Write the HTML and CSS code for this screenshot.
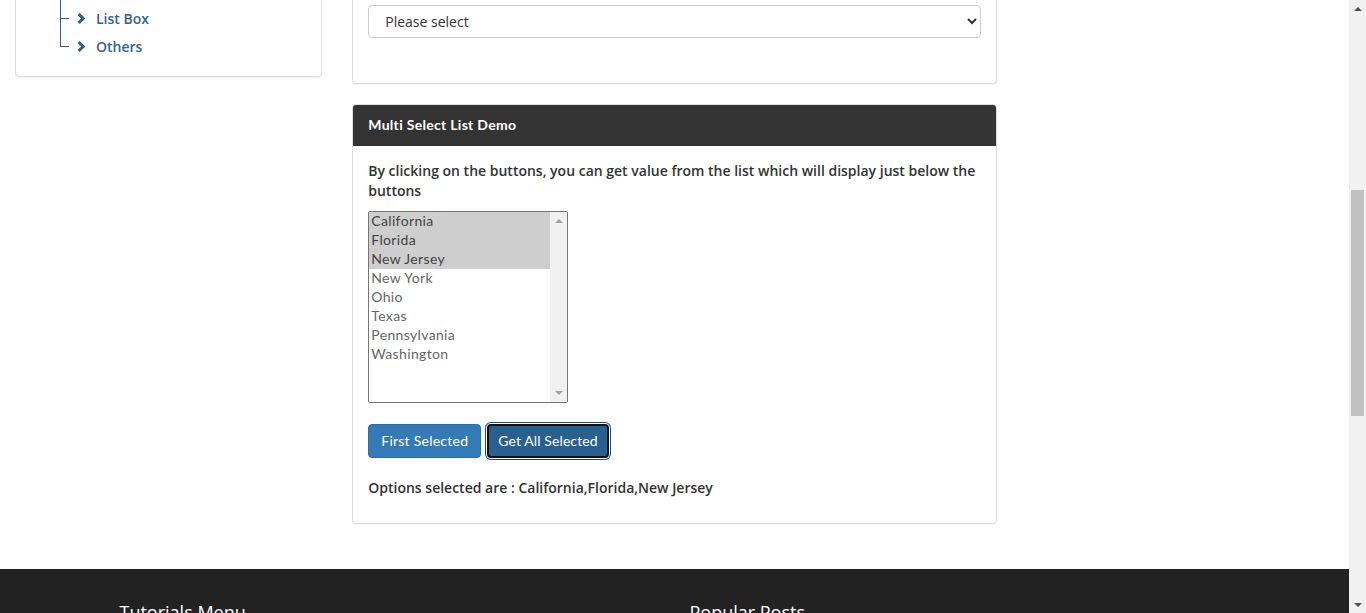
FILE: index.html
```html
<!DOCTYPE html>
<html lang="en">
<head>
<meta charset="utf-8">
<title>Multi Select List Demo</title>
<link rel="stylesheet" href="styles.css">
</head>
<body>
<div class="viewport">
  <div class="page">
    <div class="container-fluid">
      <div class="row">
        <div class="col-3">
          <div class="side-card">
            <ul class="tree">
              <li class="tree-item">
                <span class="branch"></span>
                <svg class="chev" viewBox="0 0 9 11" width="9" height="11"><path d="M1.6 1.2 L6.2 5.5 L1.6 9.8" fill="none" stroke="#2d5f93" stroke-width="3"/></svg>
                <a href="#" class="tree-link">List Box</a>
              </li>
              <li class="tree-item last">
                <span class="branch"></span>
                <svg class="chev" viewBox="0 0 9 11" width="9" height="11"><path d="M1.6 1.2 L6.2 5.5 L1.6 9.8" fill="none" stroke="#2d5f93" stroke-width="3"/></svg>
                <a href="#" class="tree-link">Others</a>
              </li>
            </ul>
          </div>
        </div>
        <div class="col-6">
          <div class="panel panel-top">
            <div class="select-body">
              <select class="form-control">
                <option>Please select</option>
              </select>
            </div>
          </div>
          <div class="panel">
            <div class="panel-heading">Multi Select List Demo</div>
            <div class="panel-body">
              <p class="intro">By clicking on the buttons, you can get value from the list which will display just below the buttons</p>
              <div class="listbox">
                <div class="listbox-options">
                  <div class="opt selected">California</div>
                  <div class="opt selected">Florida</div>
                  <div class="opt selected">New Jersey</div>
                  <div class="opt">New York</div>
                  <div class="opt">Ohio</div>
                  <div class="opt">Texas</div>
                  <div class="opt">Pennsylvania</div>
                  <div class="opt">Washington</div>
                </div>
                <div class="mini-scroll">
                  <span class="tri up"></span>
                  <span class="tri down"></span>
                </div>
              </div>
              <div class="btn-row">
                <button class="btn">First Selected</button>
                <button class="btn btn-focus">Get All Selected</button>
              </div>
              <p class="result">Options selected are : California,Florida,New Jersey</p>
            </div>
          </div>
        </div>
      </div>
    </div>
    <footer class="footer">
      <div class="footer-container">
        <div class="footer-col"><h3>Tutorials Menu</h3></div>
        <div class="footer-col"><h3>Popular Posts</h3></div>
      </div>
    </footer>
  </div>
  <div class="scrollbar">
    <span class="sb-arrow up"></span>
    <div class="sb-track">
      <div class="sb-thumb"></div>
    </div>
    <span class="sb-arrow down"></span>
  </div>
</div>
</body>
</html>
```

FILE: styles.css
```css
* { box-sizing: border-box; }
html, body { margin: 0; padding: 0; }
body {
  font-family: "Open Sans", "Liberation Sans", sans-serif;
  font-size: 14px;
  line-height: 20px;
  color: #333;
  background: #fff;
}
.viewport {
  display: flex;
  height: 613px;
  overflow: hidden;
}
.page {
  flex: 1;
  min-width: 0;
  overflow: hidden;
}
.container-fluid { padding: 0 15px; }
.row { display: flex; margin: 0 -15px; }
.col-3 { width: 25%; padding: 0 15px; }
.col-6 { width: 50%; padding: 0 15px; }

/* side tree */
.side-card {
  border: 1px solid #ddd;
  border-top: none;
  border-radius: 0 0 4px 4px;
  padding: 0 0 16px 0;
  box-shadow: 0 1px 1px rgba(0,0,0,0.05);
}
.tree {
  list-style: none;
  margin: 0 0 0 44px;
  padding: 0;
}
.tree::before {
  content: "";
  display: block;
  height: 4px;
  border-left: 1px solid #2d5f93;
}
.tree-item {
  display: flex;
  align-items: flex-start;
  height: 28px;
  border-left: 1px solid #2d5f93;
}
.tree-item.last { border-left: none; }
.branch {
  width: 8px;
  height: 15px;
  border-bottom: 1px solid #2d5f93;
  flex: none;
}
.tree-item.last .branch {
  width: 9px;
  border-left: 1px solid #2d5f93;
}
.chev {
  margin: 9px 0 0 8px;
  flex: none;
}
.tree-link {
  margin-left: 10px;
  line-height: 28px;
  padding-top: 1px;
  color: #31659c;
  text-decoration: none;
  font-weight: 600;
}

/* panels */
.panel {
  border: 1px solid #ddd;
  border-radius: 4px;
  background: #fff;
  box-shadow: 0 1px 1px rgba(0,0,0,0.05);
  margin-bottom: 45px;
}
.panel-top {
  border-top: none;
  border-radius: 0 0 4px 4px;
  margin-bottom: 20px;
}
.select-body { padding: 5px 15px 45px 15px; }
.form-control {
  display: block;
  width: 100%;
  height: 33px;
  padding: 5px 12px;
  font-family: "Open Sans", sans-serif;
  font-size: 14px;
  color: #333;
  background: #fff;
  border: 1px solid #ccc;
  border-radius: 4px;
}
.panel-heading {
  background: #333;
  color: #fff;
  font-family: "Lato", sans-serif;
  font-weight: 700;
  letter-spacing: 0.3px;
  padding: 10px 15px;
  height: 41px;
  border-radius: 3px 3px 0 0;
}
.panel-body { padding: 15px; }
.intro {
  margin: 0 0 10px 0;
  font-weight: 600;
}

/* listbox */
.listbox {
  display: flex;
  width: 200px;
  height: 192px;
  border: 1px solid #767676;
  border-radius: 2px;
  margin-bottom: 21px;
  background: #fff;
}
.listbox-options { flex: 1; }
.opt {
  height: 19px;
  line-height: 17px;
  padding: 0 2px 2px 2px;
  font-family: "Lato", sans-serif;
  letter-spacing: 0.35px;
  color: #666;
}
.opt.selected {
  background: #cecece;
  color: #444;
}
.mini-scroll {
  width: 17px;
  background: #f1f1f1;
  display: flex;
  flex-direction: column;
  justify-content: space-between;
  align-items: center;
  padding: 7px 0;
}
.tri {
  width: 0;
  height: 0;
  border-left: 4px solid transparent;
  border-right: 4px solid transparent;
}
.tri.up { border-bottom: 4px solid #a3a3a3; }
.tri.down { border-top: 4px solid #a3a3a3; }

/* buttons */
.btn-row { display: flex; gap: 4px; }
.btn {
  font-family: "Lato", sans-serif;
  font-size: 14px;
  letter-spacing: 0.25px;
  line-height: 20px;
  padding: 6px 12px;
  height: 34px;
  color: #fff;
  background: #337ab7;
  border: 1px solid #2e6da4;
  border-radius: 4px;
  cursor: pointer;
}
.btn-focus {
  background: #286090;
  border: 2px solid #111;
  box-shadow: 0 0 0 1px #fff, 0 0 0 2px #204d74;
  margin-left: 2px;
  padding: 5px 9px;
  letter-spacing: 0.1px;
}
.result {
  margin: 20px 0 10px 0;
  font-weight: 600;
}

/* footer */
.footer {
  background: #222;
  color: #fff;
  padding-top: 31px;
  height: 200px;
}
.footer-container {
  width: 1140px;
  margin: 0 auto;
  display: flex;
}
.footer-col { width: 50%; padding: 0 15px; }
.footer-col h3 {
  margin: 0;
  font-size: 18px;
  font-weight: 500;
  line-height: 24px;
}

/* page scrollbar */
.scrollbar {
  width: 17px;
  flex: none;
  background: #f1f1f1;
  display: flex;
  flex-direction: column;
}
.sb-arrow {
  height: 17px;
  display: flex;
  align-items: center;
  justify-content: center;
}
.sb-arrow::before {
  content: "";
  width: 0;
  height: 0;
  border-left: 4px solid transparent;
  border-right: 4px solid transparent;
}
.sb-arrow.up::before { border-bottom: 4px solid #505050; }
.sb-arrow.down::before { border-top: 4px solid #505050; }
.sb-track {
  flex: 1;
  padding-top: 173px;
  display: flex;
  justify-content: center;
}
.sb-thumb {
  width: 13px;
  height: 226px;
  background: #c1c1c1;
}
```
